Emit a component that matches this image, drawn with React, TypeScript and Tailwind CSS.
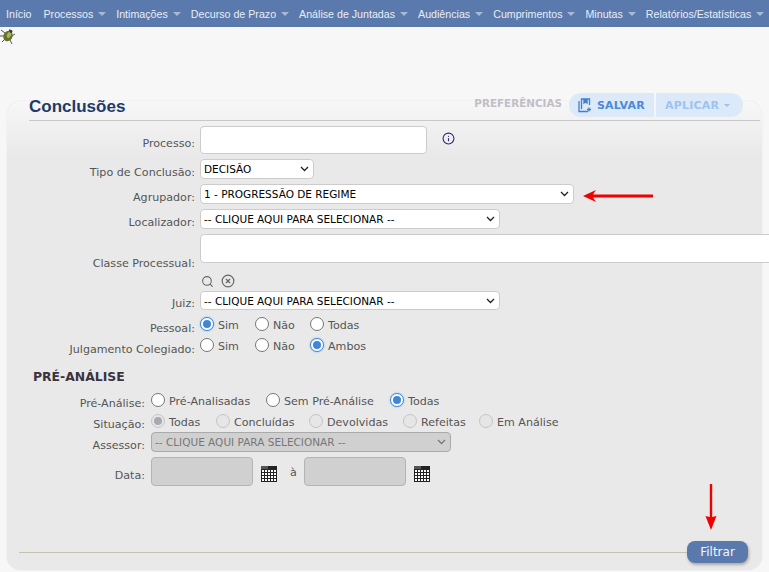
import { Info, Search, CircleX } from "lucide-react";

const menu = [
  { label: "Início" },
  { label: "Processos", caret: true },
  { label: "Intimações", caret: true },
  { label: "Decurso de Prazo", caret: true },
  { label: "Análise de Juntadas", caret: true },
  { label: "Audiências", caret: true },
  { label: "Cumprimentos", caret: true },
  { label: "Minutas", caret: true },
  { label: "Relatórios/Estatísticas", caret: true },
];

const selecione = "-- CLIQUE AQUI PARA SELECIONAR --";

function Radio({ label, checked, disabled, className }: { label: string; checked?: boolean; disabled?: boolean; className?: string }) {
  return (
    <label className={`flex items-start gap-[4px] ${className ?? ""}`}>
      {disabled ? (
        <span className="flex h-[14px] w-[14px] items-center justify-center rounded-full border border-[#c4c4c4] bg-[#e6e6e6]">
          {checked && <span className="h-[8px] w-[8px] rounded-full bg-[#a9a9b3]" />}
        </span>
      ) : checked ? (
        <span className="flex h-[14px] w-[14px] items-center justify-center rounded-full border border-[#3f87d8] bg-white shadow-[0_0_2px_#7fb2ea]">
          <span className="h-[8px] w-[8px] rounded-full bg-[#3f87d8]" />
        </span>
      ) : (
        <span className="h-[14px] w-[14px] rounded-full border border-[#767676] bg-white" />
      )}
      <span className="mt-[2px] text-[#555]">{label}</span>
    </label>
  );
}

function Select({ value, disabled, className }: { value: string; disabled?: boolean; className: string }) {
  return (
    <div className={`relative ${className}`}>
      <select
        disabled={disabled}
        className={`h-full w-full appearance-none rounded-[4px] border pl-[3px] text-[10.5px] ${
          disabled ? "border-[#aaa] bg-[#d0d0d0] text-[#777]" : "border-[#ccc] bg-white text-black"
        }`}
      >
        <option>{value}</option>
      </select>
      <svg className="pointer-events-none absolute right-[5px] top-[7px]" width="9" height="6" viewBox="0 0 9 6" fill="none" stroke={disabled ? "#777" : "#222"} strokeWidth="1.3">
        <path d="M1 1l3.5 3.5L8 1" />
      </svg>
    </div>
  );
}

function Calendar() {
  return (
    <svg width="16" height="16" viewBox="0 0 16 16">
      <rect width="16" height="16" fill="#222" />
      <rect x="0" y="0" width="7" height="3" fill="#555" />
      {[4, 7, 10, 13].map((y) =>
        [1, 4, 7, 10, 13].map((x) => <rect key={`${x}-${y}`} x={x} y={y} width="2" height="2" fill="#fff" />)
      )}
    </svg>
  );
}

function Bug() {
  return (
    <svg width="16" height="17" viewBox="0 0 16 17">
      <g stroke="#555" strokeWidth="1" fill="none">
        <path d="M5 5 L1 2 M4 8 L0 8 M5 11 L2 14 M9 4 L10 1 M12 8 L15 6 M10 12 L12 16" />
      </g>
      <ellipse cx="8" cy="8" rx="4.5" ry="5.5" transform="rotate(25 8 8)" fill="#66702a" />
      <ellipse cx="9" cy="7" rx="2" ry="3" transform="rotate(25 9 7)" fill="#a8b55a" />
      <circle cx="11" cy="3.5" r="1.4" fill="#3a3a1a" />
    </svg>
  );
}

export default function App() {
  return (
    <div className="relative h-[572px] overflow-hidden bg-[#f7f7f7] font-['DejaVu_Sans',sans-serif] text-[11.1px] leading-[14px]">
      <nav className="flex h-[27px] items-center gap-[10px] whitespace-nowrap bg-[#5a7aad] pl-[6px] font-['Liberation_Sans',sans-serif] text-[10.67px] text-[#e8edf6]">
        {menu.map((m) => (
          <div key={m.label} className="flex items-center gap-[5px] first:mr-[2px]">
            <span>{m.label}</span>
            {m.caret && <span className="mt-[1px] border-x-[4px] border-t-[4px] border-x-transparent border-t-[#a9b9d4]" />}
          </div>
        ))}
      </nav>

      <div className="h-[74px] pt-[1px]">
        <Bug />
      </div>

      <main className="relative mx-[7px] flow-root h-[469px] rounded-[14px] bg-[linear-gradient(#f7f7f7_0px,#e9e9e9_55px)] shadow-[0_0_1px_#ccc]">
        <header className="-mt-[8px] ml-[22px] mr-[2px] flex h-[28px] items-start justify-between border-b border-[#c9c9c9]">
          <h1 className="mt-[4px] font-['Liberation_Sans',sans-serif] text-[17px] font-bold leading-[20px] text-[#1f3a68]">Conclusões</h1>
          <div className="mr-[17px] flex h-[24px] items-center">
            <span className="mr-[7px] -mt-[4px] text-[10.4px] font-bold text-[#c2bec6]">PREFERÊNCIAS</span>
            <button className="flex h-[24px] w-[85px] items-center gap-[5px] rounded-l-[12px] bg-[#dbe9f9] pl-[9px] pt-[1px] text-[11px] font-bold tracking-[0.2px] text-[#4a8ad8]">
              <svg width="14" height="15" viewBox="0 0 14 15" fill="none" stroke="#3f7fcb" strokeWidth="1.3">
                <path d="M1 3v10.5h9" />
                <path d="M3.5 11V1h8v6" />
                <path d="M6 1v4l1.5-1 1.5 1V1" fill="#3f7fcb" />
                <path d="M11 9.5v4M9 11.5h4" />
              </svg>
              SALVAR
            </button>
            <button className="ml-[2px] flex h-[24px] w-[87px] items-center gap-[5px] rounded-r-[12px] bg-[#dbe9f9] pl-[9px] pt-[1px] text-[11px] font-bold tracking-[0.2px] text-[#9dc3ef]">
              APLICAR
              <span className="border-x-[3px] border-t-[3px] border-x-transparent border-t-[#9dc3ef]" />
            </button>
          </div>
        </header>

        <div className="pt-[5px]">
          <div className="mb-[5px] flex items-start gap-[5px]">
            <span className="mt-[11px] w-[188px] text-right text-[#555]">Processo:</span>
            <input className="h-[28px] w-[227px] rounded-[4px] border border-[#ccc] bg-white" />
            <Info size={13} className="ml-[10px] mt-[6px] text-[#2e2a78]" />
          </div>
          <div className="mb-[5px] flex h-[20px] items-start gap-[5px]">
            <span className="mt-[7px] w-[188px] text-right text-[#555]">Tipo de Conclusão:</span>
            <Select value="DECISÃO" className="h-[20px] w-[114px]" />
          </div>
          <div className="mb-[5px] flex h-[20px] items-start gap-[5px]">
            <span className="mt-[7px] w-[188px] text-right text-[#555]">Agrupador:</span>
            <Select value="1 - PROGRESSÃO DE REGIME" className="h-[20px] w-[374px]" />
          </div>
          <div className="mb-[5px] flex h-[20px] items-start gap-[5px]">
            <span className="mt-[7px] w-[188px] text-right text-[#555]">Localizador:</span>
            <Select value={selecione} className="h-[20px] w-[300px]" />
          </div>
          <div className="flex h-[29px] items-start gap-[5px]">
            <span className="mt-[23px] w-[188px] shrink-0 text-right text-[#555]">Classe Processual:</span>
            <div className="h-[29px] w-[600px] shrink-0 rounded-l-[4px] border border-[#ccc] bg-white" />
          </div>
          <div className="ml-[194px] flex h-[28px] items-center gap-[7px] pt-[8px] text-[#666]">
            <Search size={13} />
            <CircleX size={14} />
          </div>
          <div className="mb-[7px] flex h-[19px] items-start gap-[5px]">
            <span className="mt-[6px] w-[188px] text-right text-[#555]">Juiz:</span>
            <Select value={selecione} className="h-[19px] w-[300px]" />
          </div>
          <div className="flex h-[21px] items-start gap-[5px]">
            <span className="mt-[5px] w-[188px] text-right text-[#555]">Pessoal:</span>
            <div className="flex">
              <Radio label="Sim" checked className="w-[55px]" />
              <Radio label="Não" className="w-[55px]" />
              <Radio label="Todas" />
            </div>
          </div>
          <div className="flex h-[31px] items-start gap-[5px]">
            <span className="mt-[5px] w-[188px] text-right text-[#555]">Julgamento Colegiado:</span>
            <div className="flex">
              <Radio label="Sim" className="w-[55px]" />
              <Radio label="Não" className="w-[55px]" />
              <Radio label="Ambos" checked />
            </div>
          </div>

          <h2 className="mb-[8px] ml-[26px] h-[16px] text-[12.4px] font-bold leading-[16px] text-[#3b3340]">PRÉ-ANÁLISE</h2>

          <div className="flex h-[21px] items-start gap-[6px]">
            <span className="mt-[4px] w-[138px] text-right text-[#555]">Pré-Análise:</span>
            <div className="flex">
              <Radio label="Pré-Analisadas" className="w-[115px]" />
              <Radio label="Sem Pré-Análise" className="w-[124px]" />
              <Radio label="Todas" checked />
            </div>
          </div>
          <div className="flex h-[18px] items-start gap-[6px]">
            <span className="mt-[4px] w-[138px] text-right text-[#555]">Situação:</span>
            <div className="flex">
              <Radio label="Todas" checked disabled className="w-[65px]" />
              <Radio label="Concluídas" disabled className="w-[93px]" />
              <Radio label="Devolvidas" disabled className="w-[94px]" />
              <Radio label="Refeitas" disabled className="w-[76px]" />
              <Radio label="Em Análise" disabled />
            </div>
          </div>
          <div className="mb-[5px] flex h-[20px] items-start gap-[6px]">
            <span className="mt-[7px] w-[138px] text-right text-[#555]">Assessor:</span>
            <Select value={selecione} disabled className="h-[20px] w-[300px]" />
          </div>
          <div className="flex h-[29px] items-center">
            <span className="mt-[9px] w-[138px] text-right text-[#555]">Data:</span>
            <input disabled className="ml-[6px] h-[29px] w-[102px] rounded-[4px] border border-[#b4b4b4] bg-[#d0d0d0]" />
            <span className="ml-[8px] mt-[5px]"><Calendar /></span>
            <span className="ml-[13px] mt-[3px] w-[14px] text-[#555]">à</span>
            <input disabled className="h-[29px] w-[102px] rounded-[4px] border border-[#b4b4b4] bg-[#d0d0d0]" />
            <span className="ml-[8px] mt-[5px]"><Calendar /></span>
          </div>
        </div>

        <footer className="mt-[55px] flex items-center pl-[12px] pr-[14px]">
          <div className="h-px flex-1 bg-[#c5c3ae]" />
          <button className="-ml-[3px] h-[22px] w-[61px] rounded-[8px] bg-[#5a7aad] text-[12px] text-[#f2f5fa] shadow-[1px_2px_3px_#aaa]">Filtrar</button>
        </footer>
      </main>

      <svg className="absolute left-[582px] top-[188px]" width="72" height="16" viewBox="0 0 72 16">
        <path d="M1 8 L14 2 L11 6.5 H71 V9.5 H11 L14 14 Z" fill="#f00000" />
      </svg>
      <svg className="absolute left-[703px] top-[483px]" width="16" height="48" viewBox="0 0 16 48">
        <path d="M6.8 1 H9.2 V34 L13.5 33 L8 47 L2.5 33 L6.8 34 Z" fill="#f00000" />
      </svg>
    </div>
  );
}
